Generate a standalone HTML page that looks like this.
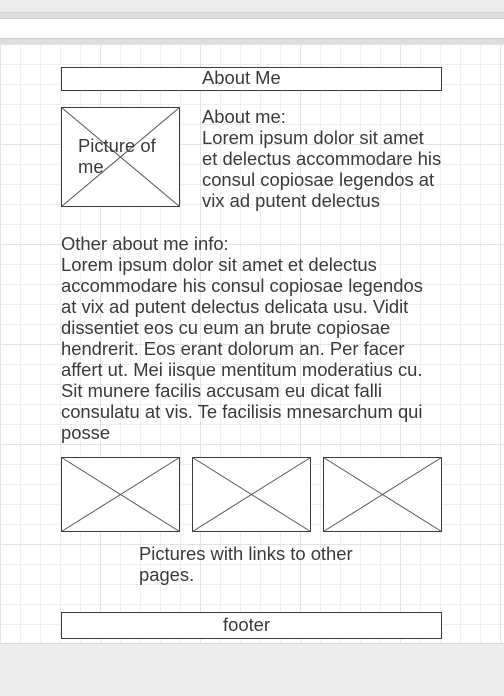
<!DOCTYPE html>
<html><head><style>
html,body{margin:0;padding:0}
body{width:504px;height:696px;background:#ededed;position:relative;overflow:hidden;font-family:"Liberation Sans",sans-serif;color:#3a3a3a}
.b1{position:absolute;left:0;top:12px;width:504px;height:7px;background:#dedede;border-top:1px solid #d0d0d0;border-bottom:1px solid #d0d0d0;box-sizing:border-box}
.b2{position:absolute;left:0;top:19px;width:504px;height:19px;background:#fff}
.b3{position:absolute;left:0;top:38px;width:504px;height:6px;background:#dedede;border-top:1px solid #d0d0d0;box-sizing:border-box}
.canvas{position:absolute;left:0;top:44px;width:504px;height:599px;background-color:#fff;
background-image:linear-gradient(90deg,#e4e4e4 1px,transparent 1px),linear-gradient(#e4e4e4 1px,transparent 1px),linear-gradient(90deg,#efefef 1px,transparent 1px),linear-gradient(#efefef 1px,transparent 1px);
background-size:100px 100px,100px 100px,20px 20px,20px 20px;background-position:0 0;border-bottom:1px solid #d6d6d6}
.box{position:absolute;border:1px solid #3a3a3a;background:#fff;box-sizing:border-box}
.t{position:absolute;font-size:18.4px;line-height:21px;white-space:nowrap}
svg{position:absolute;left:0;top:0}
</style></head><body>
<div class="b1"></div><div class="b2"></div><div class="b3"></div>
<div class="canvas"></div>
<div class="box" style="left:61px;top:67px;width:381px;height:24px"></div>
<div class="t" style="left:202px;top:67px">About Me</div>
<div class="box" style="left:61px;top:107px;width:119px;height:100px"></div>
<div class="box" style="left:61px;top:457px;width:119px;height:75px"></div>
<div class="box" style="left:192px;top:457px;width:119px;height:75px"></div>
<div class="box" style="left:323px;top:457px;width:119px;height:75px"></div>
<svg width="504" height="696"><g stroke="#555" stroke-width="1" fill="none">
<line x1="61.5" y1="107.5" x2="179.5" y2="206.5"/><line x1="179.5" y1="107.5" x2="61.5" y2="206.5"/>
<line x1="61.5" y1="457.5" x2="179.5" y2="531.5"/><line x1="179.5" y1="457.5" x2="61.5" y2="531.5"/>
<line x1="192.5" y1="457.5" x2="310.5" y2="531.5"/><line x1="310.5" y1="457.5" x2="192.5" y2="531.5"/>
<line x1="323.5" y1="457.5" x2="441.5" y2="531.5"/><line x1="441.5" y1="457.5" x2="323.5" y2="531.5"/>
</g></svg>
<div class="t" style="left:78px;top:135px">Picture of<br>me</div>
<div class="t" style="left:202px;top:106px">About me:<br>Lorem ipsum dolor sit amet<br>et delectus accommodare his<br>consul copiosae legendos at<br>vix ad putent delectus</div>
<div class="t" style="left:61px;top:233px">Other about me info:<br>Lorem ipsum dolor sit amet et delectus<br>accommodare his consul copiosae legendos<br>at vix ad putent delectus delicata usu. Vidit<br>dissentiet eos cu eum an brute copiosae<br>hendrerit. Eos erant dolorum an. Per facer<br>affert ut. Mei iisque mentitum moderatius cu.<br>Sit munere facilis accusam eu dicat falli<br>consulatu at vis. Te facilisis mnesarchum qui<br>posse</div>
<div class="t" style="left:139px;top:543px">Pictures with links to other<br>pages.</div>
<div class="box" style="left:61px;top:612px;width:381px;height:27px"></div>
<div class="t" style="left:223px;top:614px">footer</div>
</body></html>
